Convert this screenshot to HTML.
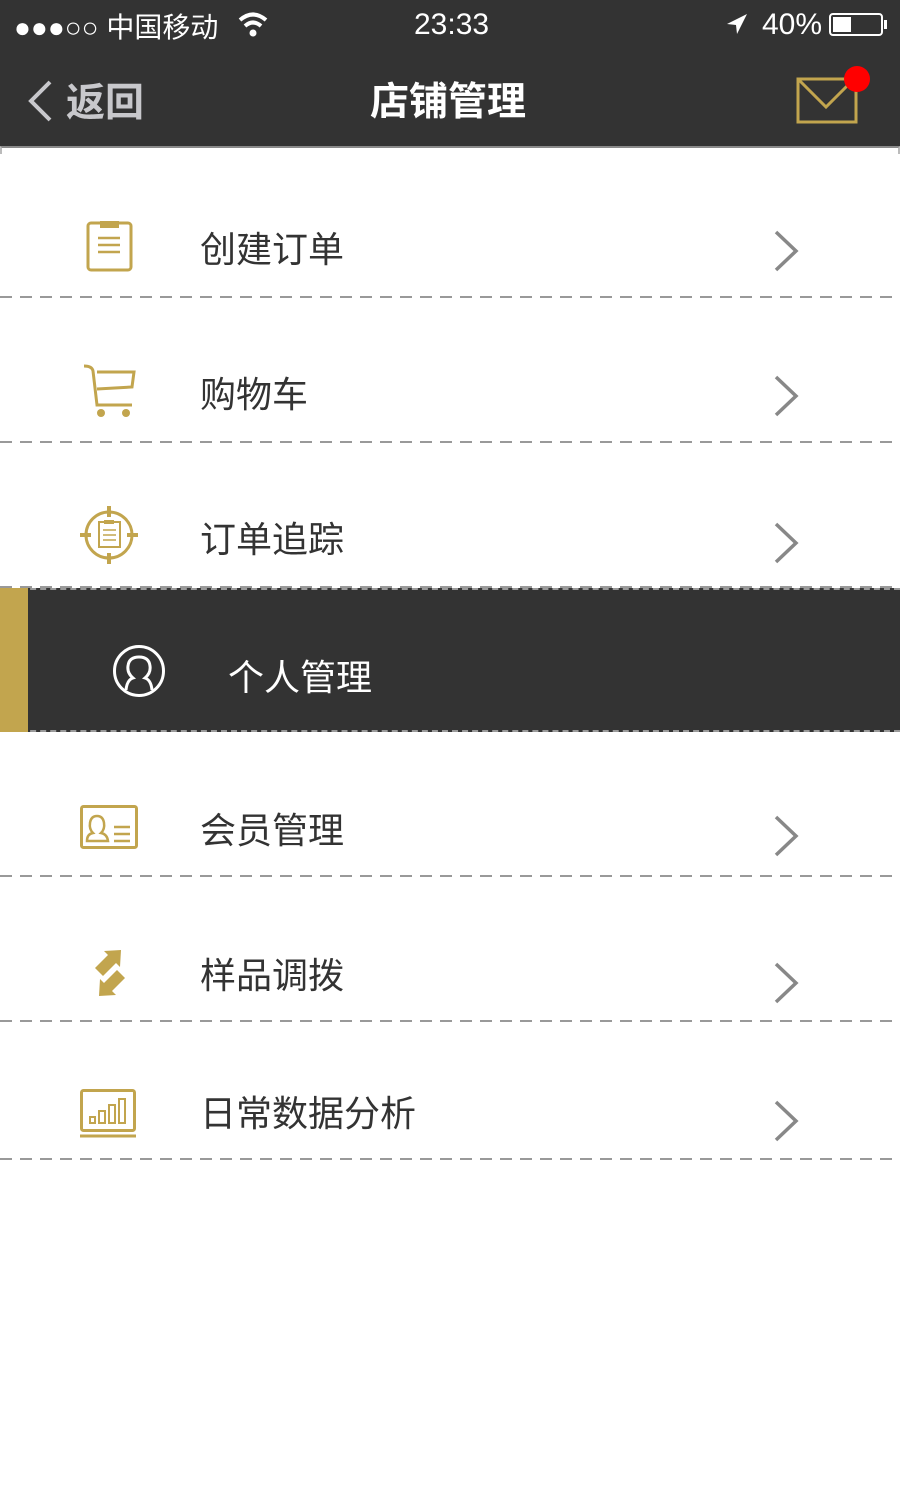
<!DOCTYPE html>
<html><head><meta charset="utf-8"><style>
*{margin:0;padding:0;box-sizing:border-box}
body{width:900px;height:1497px;background:#fff;font-family:"Liberation Sans","Noto Sans CJK SC",sans-serif;position:relative;overflow:hidden}
.hd{position:absolute;left:0;top:0;width:900px;height:146px;background:#333}
.sep{position:absolute;left:0;top:146px;width:900px;height:8px;background:#fff;border-top:2px solid #8a8a8a;border-left:2px solid #bbb;border-right:2px solid #bbb}
.t{position:absolute;color:#fff;white-space:nowrap}
.row{position:absolute;left:0;width:900px;height:145px}
.row:after,.dl{content:"";position:absolute;left:0;bottom:0;width:900px;height:2px;background:repeating-linear-gradient(90deg,#999 0 12px,transparent 12px 20px)}
.row .lbl{position:absolute;left:200px;font-size:36px;color:#333;white-space:nowrap}
.row svg.ic{position:absolute}
.chev{position:absolute;left:772px;width:30px;height:44px}
</style></head><body>
<div class="hd"></div>
<div class="t" style="left:14px;top:6px;font-size:28px;color:#fff">●●●○○ 中国移动</div>
<svg style="position:absolute;left:237px;top:10px" width="32" height="28" viewBox="0 0 32 28"><path d="M3 10 Q16 -1 29 10" stroke="#fff" stroke-width="4" fill="none"/><path d="M8 16 Q16 9 24 16" stroke="#fff" stroke-width="4" fill="none"/><circle cx="16" cy="23" r="3.5" fill="#fff"/></svg>
<div class="t" style="left:414px;top:8px;font-size:30px">23:33</div>
<svg style="position:absolute;left:725px;top:12px" width="24" height="24" viewBox="0 0 24 24"><path d="M22 2 L2 12 L11 13 L12 22 Z" fill="#fff"/></svg>
<div class="t" style="left:762px;top:8px;font-size:30px">40%</div>
<div style="position:absolute;left:829px;top:13px;width:54px;height:23px;border:2px solid #fff;border-radius:4px"><div style="position:absolute;left:2px;top:2px;width:18px;height:15px;background:#fff"></div></div>
<div style="position:absolute;left:884px;top:20px;width:3px;height:9px;background:#fff"></div>
<svg style="position:absolute;left:26px;top:80px" width="28" height="42" viewBox="0 0 28 42"><path d="M24 2 L5 21 L24 40" stroke="#c8c8cc" stroke-width="4" fill="none"/></svg>
<div class="t" style="left:66px;top:72px;font-size:39px;color:#c8c8cc;font-weight:bold">返回</div>
<div class="t" style="left:370px;top:71px;font-size:39px;font-weight:bold">店铺管理</div>
<svg style="position:absolute;left:796px;top:76px" width="62" height="48" viewBox="0 0 62 48"><rect x="2" y="3" width="58" height="43" fill="none" stroke="#c2a54e" stroke-width="3"/><path d="M3 4 L30 31 L57 4" fill="none" stroke="#c2a54e" stroke-width="3"/></svg>
<div style="position:absolute;left:844px;top:66px;width:26px;height:26px;border-radius:50%;background:#f00"></div>
<div class="sep"></div>

<div class="row" style="top:153px">
<svg class="ic" style="left:86px;top:67px" width="48" height="52" viewBox="0 0 48 52"><rect x="2" y="3" width="43" height="47" rx="3" fill="none" stroke="#c2a54e" stroke-width="3"/><rect x="14" y="1" width="19" height="7" fill="#c2a54e"/><path d="M12 18h22M12 25h22M12 32h22" stroke="#c2a54e" stroke-width="2.5"/></svg>
<div class="lbl" style="top:68px">创建订单</div>
<svg class="chev" style="top:76px" viewBox="0 0 30 44"><path d="M4 3 L24 22 L4 41" stroke="#888" stroke-width="3.5" fill="none"/></svg></div>

<div class="row" style="top:298px">
<svg class="ic" style="left:82px;top:65px" width="56" height="56" viewBox="0 0 56 56"><path d="M2 3 Q10 3 11 8 L15 42 H50" stroke="#c2a54e" stroke-width="3" fill="none"/><path d="M15 9 H52 L50 24 L15 26" stroke="#c2a54e" stroke-width="3" fill="none"/><circle cx="19" cy="50" r="4" fill="#c2a54e"/><circle cx="44" cy="50" r="4" fill="#c2a54e"/></svg>
<div class="lbl" style="top:68px">购物车</div>
<svg class="chev" style="top:76px" viewBox="0 0 30 44"><path d="M4 3 L24 22 L4 41" stroke="#888" stroke-width="3.5" fill="none"/></svg></div>

<div class="row" style="top:443px">
<svg class="ic" style="left:80px;top:63px" width="58" height="58" viewBox="0 0 58 58"><circle cx="29" cy="29" r="23" stroke="#c2a54e" stroke-width="3" fill="none"/><path d="M29 0v11M29 47v11M0 29h11M47 29h11" stroke="#c2a54e" stroke-width="4"/><rect x="19" y="16" width="21" height="25" fill="none" stroke="#c2a54e" stroke-width="2"/><rect x="24" y="14" width="10" height="4" fill="#c2a54e"/><path d="M23 24h13M23 29h13M23 34h13" stroke="#c2a54e" stroke-width="1.5"/></svg>
<div class="lbl" style="top:68px">订单追踪</div>
<svg class="chev" style="top:78px" viewBox="0 0 30 44"><path d="M4 3 L24 22 L4 41" stroke="#888" stroke-width="3.5" fill="none"/></svg></div>

<div style="position:absolute;left:0;top:588px;width:900px;height:144px;background:#333;border-top:2px dashed #999;border-bottom:2px dashed #999"></div>
<div style="position:absolute;left:0;top:588px;width:28px;height:144px;background:#c2a54e"></div>
<svg style="position:absolute;left:112px;top:644px" width="54" height="54" viewBox="0 0 54 54"><circle cx="27" cy="27" r="24.5" stroke="#fff" stroke-width="3" fill="none"/><path d="M14 46 Q15 36 21 34 Q15 29 16 22 Q17 13 27 13 Q37 13 38 22 Q39 29 33 34 Q39 36 40 46" stroke="#fff" stroke-width="3" fill="none"/></svg>
<div class="t" style="left:228px;top:649px;font-size:36px">个人管理</div>

<div class="row" style="top:732px">
<svg class="ic" style="left:80px;top:73px" width="58" height="44" viewBox="0 0 58 44"><rect x="1.5" y="1.5" width="55" height="41" rx="2" fill="none" stroke="#c2a54e" stroke-width="3"/><path d="M7 36 Q7 29 13 28 Q9 24 10 18 Q11 11 17 11 Q23 11 24 18 Q25 24 21 28 Q27 29 28 36 Z" fill="none" stroke="#c2a54e" stroke-width="2.5"/><path d="M34 22h16M34 29h16M34 36h16" stroke="#c2a54e" stroke-width="2.5"/></svg>
<div class="lbl" style="top:70px">会员管理</div>
<svg class="chev" style="top:82px" viewBox="0 0 30 44"><path d="M4 3 L24 22 L4 41" stroke="#888" stroke-width="3.5" fill="none"/></svg></div>

<div class="row" style="top:877px">
<svg class="ic" style="left:92px;top:72px" width="36" height="48" viewBox="0 0 36 48"><path d="M3 19 L16 6 L12 2 L29 1 L28 18 L24 14 L11 27 Z" fill="#c2a54e"/><path d="M33 29 L20 42 L24 46 L7 47 L8 30 L12 34 L25 21 Z" fill="#c2a54e"/></svg>
<div class="lbl" style="top:70px">样品调拨</div>
<svg class="chev" style="top:84px" viewBox="0 0 30 44"><path d="M4 3 L24 22 L4 41" stroke="#888" stroke-width="3.5" fill="none"/></svg></div>

<div class="row" style="top:1022px;height:138px">
<svg class="ic" style="left:80px;top:67px" width="58" height="50" viewBox="0 0 58 50"><rect x="1.5" y="1.5" width="53" height="40" rx="2" fill="none" stroke="#c2a54e" stroke-width="3"/><path d="M0 47h56" stroke="#c2a54e" stroke-width="3"/><rect x="10" y="28" width="5" height="6" fill="none" stroke="#c2a54e" stroke-width="2"/><rect x="19" y="22" width="6" height="12" fill="none" stroke="#c2a54e" stroke-width="2"/><rect x="29" y="16" width="6" height="18" fill="none" stroke="#c2a54e" stroke-width="2"/><rect x="39" y="10" width="6" height="24" fill="none" stroke="#c2a54e" stroke-width="2"/></svg>
<div class="lbl" style="top:63px">日常数据分析</div>
<svg class="chev" style="top:77px" viewBox="0 0 30 44"><path d="M4 3 L24 22 L4 41" stroke="#888" stroke-width="3.5" fill="none"/></svg></div>
</body></html>
